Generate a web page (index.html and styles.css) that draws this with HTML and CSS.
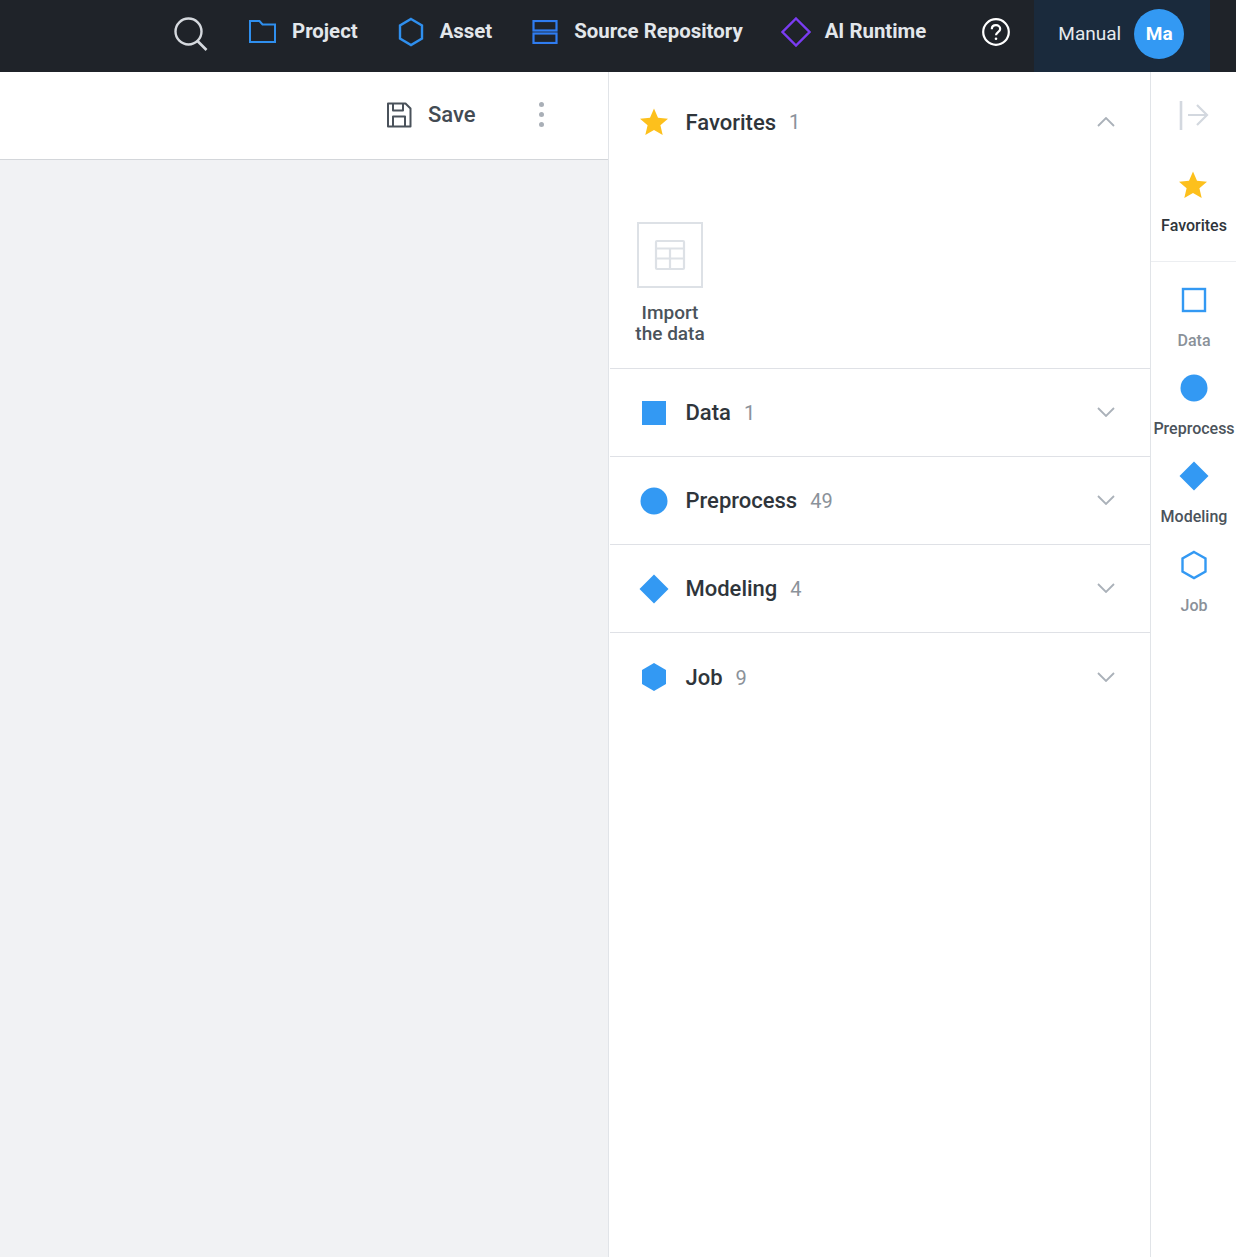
FILE: index.html
```html
<!DOCTYPE html>
<html lang="en">
<head>
	<meta charset="utf-8">
	<title>Workflow editor</title>
	<link rel="stylesheet" href="styles.css">
</head>
<body>
	<header class="topbar">
		<svg class="search-icon" width="36" height="36" viewBox="0 0 36 36" fill="none" stroke="#d5d9de" stroke-width="2.4">
			<circle cx="15.5" cy="15.5" r="13"/>
			<path d="M24.500 25l9 9" stroke-width="2.600"/>
		</svg>
		<a class="nav-item nav-project">
			<svg width="27" height="23" viewBox="0 0 27 23" fill="none" stroke="#2f8fee" stroke-width="2"><path d="M1 1h9.500l3 3.500H26V22H1z"/></svg>
			<span>Project</span>
		</a>
		<a class="nav-item nav-asset">
			<svg width="26" height="30" viewBox="0 0 26 30" fill="none" stroke="#2f8fee" stroke-width="2.4"><path d="M13 2l11 6.500v13L13 28 2 21.500v-13z"/></svg>
			<span>Asset</span>
		</a>
		<a class="nav-item nav-source">
			<svg width="26" height="24" viewBox="0 0 26 24" fill="none" stroke="#2f7cf0" stroke-width="2.2"><rect x="1.500" y="1" width="23" height="9.500"/><rect x="1.500" y="13.500" width="23" height="9.500"/></svg>
			<span>Source Repository</span>
		</a>
		<a class="nav-item nav-runtime">
			<svg width="30" height="30" viewBox="0 0 30 30" fill="none" stroke="#7a3cf2" stroke-width="2.400"><path d="M15 1.500L28.500 15 15 28.500 1.500 15z"/></svg>
			<span>AI Runtime</span>
		</a>
		<svg class="help-icon" width="28" height="28" viewBox="0 0 28 28" fill="none" stroke="#fff" stroke-width="2.200">
			<circle cx="14" cy="14" r="12.800"/>
			<path d="M9.800 11.200c0-2.500 1.900-4 4.200-4s4.200 1.500 4.200 3.700c0 3.200-4.200 3.200-4.200 6.300"/>
			<circle cx="14" cy="20.800" r="1.300" fill="#fff" stroke="none"/>
		</svg>
		<div class="user-box">
			<span class="user-name">Manual</span>
			<span class="avatar">Ma</span>
		</div>
	</header>

	<main class="workspace">
		<section class="canvas-pane">
			<div class="toolbar">
				<button class="save-btn">
					<svg width="26" height="26" viewBox="0 0 26 26" fill="none" stroke="#4a525b" stroke-width="2" stroke-linejoin="round">
						<path d="M2 1.500h17.500l5 5v18H2z"/>
						<path d="M7 1.500v7h10v-7"/>
						<path d="M7 24.500v-10h12v10"/>
					</svg>
					<span>Save</span>
				</button>
				<div class="more-dots"><i></i><i></i><i></i></div>
			</div>
			<div class="canvas"></div>
		</section>

		<section class="palette">
			<div class="group group-open">
				<div class="group-head">
					<svg class="group-icon" width="30" height="30" viewBox="0 0 30 30"><path d="M15 1.500l4 9.300 10 .9-7.600 6.600 2.300 9.800L15 22.900l-8.700 5.200 2.300-9.800L1 11.700l10-.9z" fill="#fdc01c"/></svg>
					<span class="group-title">Favorites</span>
					<span class="group-count">1</span>
					<svg class="chevron" width="18" height="10" viewBox="0 0 18 10" fill="none" stroke="#aab1b9" stroke-width="1.800"><path d="M1 9l8-8 8 8"/></svg>
				</div>
				<div class="group-body">
					<div class="tile">
						<div class="tile-box">
							<svg width="32" height="32" viewBox="0 0 32 32" fill="none" stroke="#dde1e6" stroke-width="2.200"><rect x="2" y="2" width="28" height="28" rx="1"/><path d="M2 9.500h28M2 19.500h28M16 9.500v20.500"/></svg>
						</div>
						<div class="tile-label">Import<br>the data</div>
					</div>
				</div>
			</div>
			<div class="group">
				<div class="group-head">
					<svg class="group-icon" width="30" height="30" viewBox="0 0 30 30"><rect x="3" y="3" width="24" height="24" fill="#3399f3"/></svg>
					<span class="group-title">Data</span>
					<span class="group-count">1</span>
					<svg class="chevron" width="18" height="10" viewBox="0 0 18 10" fill="none" stroke="#aab1b9" stroke-width="1.800"><path d="M1 1l8 8 8-8"/></svg>
				</div>
			</div>
			<div class="group">
				<div class="group-head">
					<svg class="group-icon" width="30" height="30" viewBox="0 0 30 30"><circle cx="15" cy="15" r="13.500" fill="#3399f3"/></svg>
					<span class="group-title">Preprocess</span>
					<span class="group-count">49</span>
					<svg class="chevron" width="18" height="10" viewBox="0 0 18 10" fill="none" stroke="#aab1b9" stroke-width="1.800"><path d="M1 1l8 8 8-8"/></svg>
				</div>
			</div>
			<div class="group">
				<div class="group-head">
					<svg class="group-icon" width="30" height="30" viewBox="0 0 30 30"><path d="M15 .5L29.500 15 15 29.500 .5 15z" fill="#3399f3"/></svg>
					<span class="group-title">Modeling</span>
					<span class="group-count">4</span>
					<svg class="chevron" width="18" height="10" viewBox="0 0 18 10" fill="none" stroke="#aab1b9" stroke-width="1.800"><path d="M1 1l8 8 8-8"/></svg>
				</div>
			</div>
			<div class="group group-last">
				<div class="group-head">
					<svg class="group-icon" width="30" height="30" viewBox="0 0 30 30"><path d="M15 1l12 7v14l-12 7-12-7V8z" fill="#3399f3"/></svg>
					<span class="group-title">Job</span>
					<span class="group-count">9</span>
					<svg class="chevron" width="18" height="10" viewBox="0 0 18 10" fill="none" stroke="#aab1b9" stroke-width="1.800"><path d="M1 1l8 8 8-8"/></svg>
				</div>
			</div>
		</section>

		<aside class="rail">
			<div class="rail-top">
				<svg class="collapse-icon" width="30" height="30" viewBox="0 0 30 30" fill="none" stroke="#d3d8df" stroke-width="2.200"><path d="M2 1v29" stroke-width="2.600"/><path d="M9 15h19M18 5l10 10-10 10"/></svg>
				<div class="rail-item rail-fav">
					<svg width="30" height="30" viewBox="0 0 30 30"><path d="M15 1.500l4 9.300 10 .9-7.600 6.600 2.300 9.800L15 22.900l-8.700 5.200 2.300-9.800L1 11.700l10-.9z" fill="#fdc01c"/></svg>
					<span class="dark">Favorites</span>
				</div>
			</div>
			<div class="rail-list">
				<div class="rail-item">
					<svg width="30" height="30" viewBox="0 0 30 30" fill="none" stroke="#3399f3" stroke-width="2.400"><rect x="4" y="4" width="22" height="22"/></svg>
					<span>Data</span>
				</div>
				<div class="rail-item">
					<svg width="30" height="30" viewBox="0 0 30 30"><circle cx="15" cy="15" r="13.500" fill="#3399f3"/></svg>
					<span class="mid">Preprocess</span>
				</div>
				<div class="rail-item">
					<svg width="30" height="30" viewBox="0 0 30 30"><path d="M15 .5L29.500 15 15 29.500 .5 15z" fill="#3399f3"/></svg>
					<span class="mid">Modeling</span>
				</div>
				<div class="rail-item rail-job">
					<svg width="30" height="30" viewBox="0 0 30 30" fill="none" stroke="#3399f3" stroke-width="2.400"><path d="M15 2l11.500 6.500v13L15 28 3.500 21.500v-13z"/></svg>
					<span>Job</span>
				</div>
			</div>
		</aside>
	</main>
</body>
</html>
```

FILE: styles.css
```css
* {
	box-sizing: border-box;
}
html, body {
	height: 100%;
}
body {
	margin: 0;
	height: 1257px;
	overflow: hidden;
	display: flex;
	flex-direction: column;
	font-family: Roboto, "Liberation Sans", sans-serif;
	background-color: #fff;
	color: #2f353b;
}

/* top navigation */
.topbar {
	height: 72px;
	flex: none;
	display: flex;
	align-items: center;
	padding-left: 173px;
	background-color: #1f2329;
}
.search-icon {
	margin-right: 40px;
	margin-top: -4px;
}
.nav-item {
	display: flex;
	align-items: center;
	gap: 16px;
	margin-top: -9px;
	font-size: 20.4px;
	font-weight: 700;
	color: #e3e7eb;
}
.nav-item span {
	margin-top: -2px;
}
.nav-project {
	margin-right: 40px;
}
.nav-asset {
	margin-right: 40px;
}
.nav-source {
	margin-right: 38px;
}
.nav-runtime {
	margin-right: 56px;
}
.nav-runtime svg {
	margin-right: -2px;
}
.help-icon {
	margin-top: -9px;
	margin-right: 24px;
}
.user-box {
	width: 176px;
	height: 72px;
	display: flex;
	align-items: center;
	padding-left: 24px;
	padding-bottom: 4px;
	background-color: #1a2a3c;
}
.user-name {
	margin-top: -2px;
	margin-right: 13px;
	font-size: 19px;
	color: #e6eaee;
}
.avatar {
	width: 50px;
	height: 50px;
	padding-bottom: 2px;
	border-radius: 50%;
	display: flex;
	align-items: center;
	justify-content: center;
	background-color: #3399f3;
	color: #fff;
	font-size: 19px;
	font-weight: 700;
}

/* three columns */
.workspace {
	flex: 1;
	display: flex;
	min-height: 0;
}
.canvas-pane {
	width: 609px;
	flex: none;
	display: flex;
	flex-direction: column;
	border-right: 1px solid #e1e4e8;
}
.toolbar {
	height: 88px;
	flex: none;
	display: flex;
	align-items: center;
	padding-left: 386px;
	border-bottom: 1px solid #d3d6da;
	background-color: #fff;
}
.save-btn {
	display: flex;
	align-items: center;
	gap: 16px;
	padding: 0;
	border: none;
	background: none;
	margin-top: -2px;
	font-family: inherit;
	font-size: 22px;
	font-weight: 500;
	color: #434b53;
}
.more-dots {
	margin-left: 63px;
	margin-top: -2px;
	display: flex;
	flex-direction: column;
	gap: 5px;
}
.more-dots i {
	width: 5px;
	height: 5px;
	border-radius: 50%;
	background-color: #a9afb7;
}
.canvas {
	flex: 1;
	background-color: #f1f2f4;
}

.palette {
	width: 542px;
	flex: none;
	border-right: 1px solid #e1e4e8;
}
.group {
	margin-left: 1px;
	border-bottom: 1px solid #dfe1e6;
}
.group-last {
	border-bottom: none;
}
.group-head {
	height: 87px;
	display: flex;
	align-items: center;
	padding-left: 29px;
}
.group-open {
	height: 297px;
}
.group-open .group-head {
	height: 100px;
}
.group-last .group-head {
	height: 89px;
}
.group-last .group-icon {
	margin-top: -2px;
}
.group-icon {
	margin-right: 16.5px;
}
.group-title {
	font-size: 22px;
	font-weight: 500;
	color: #2f353b;
}
.group-count {
	margin-left: 13px;
	font-size: 20px;
	color: #8b929a;
}
.chevron {
	margin-left: auto;
	margin-right: 35px;
	margin-top: -1px;
}
.group-body {
	padding: 50px 0 0 25px;
}
.tile {
	width: 70px;
	display: flex;
	flex-direction: column;
	align-items: center;
}
.tile-box {
	width: 66px;
	height: 66px;
	flex: none;
	display: flex;
	align-items: center;
	justify-content: center;
	border: 2px solid #dde1e6;
}
.tile-label {
	margin-top: 14px;
	font-size: 19px;
	line-height: 21px;
	font-weight: 500;
	text-align: center;
	white-space: nowrap;
	color: #4b535b;
}

/* right rail */
.rail {
	flex: 1;
	display: flex;
	flex-direction: column;
	align-items: stretch;
}
.rail-top {
	height: 190px;
	border-bottom: 1px solid #eceef1;
	display: flex;
	flex-direction: column;
	align-items: center;
}
.collapse-icon {
	margin-top: 28px;
}
.rail-fav {
	margin-top: 40px;
}
.rail-list {
	padding-top: 23px;
	display: flex;
	flex-direction: column;
	gap: 23px;
}
.rail-item {
	display: flex;
	flex-direction: column;
	align-items: center;
	gap: 16px;
	font-size: 16px;
	line-height: 19px;
	font-weight: 500;
	color: #8a9199;
}
.rail-item span {
	padding-left: 1px;
}
.rail-item .dark {
	color: #2f353b;
}
.rail-item .mid {
	color: #4b535b;
}
.rail-job {
	margin-top: 1px;
}
```
